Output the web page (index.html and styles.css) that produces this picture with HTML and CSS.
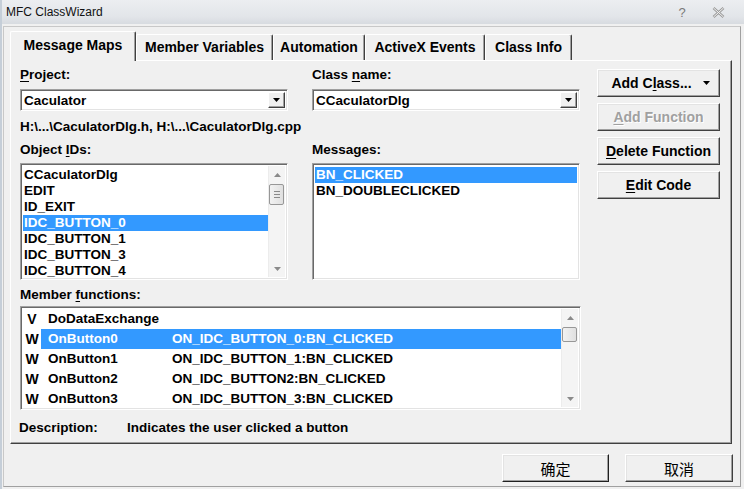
FILE: index.html
```html
<!DOCTYPE html>
<html>
<head>
<meta charset="utf-8">
<link rel="stylesheet" href="styles.css">
</head>
<body>
<div class="titlebar">
  <span class="title">MFC ClassWizard</span>
  <span class="tbtn help">?</span>
  <span class="tbtn close"><svg width="13" height="11" viewBox="0 0 13 11"><path d="M1.5 1 L11.5 10 M11.5 1 L1.5 10" stroke="#9a9a9a" stroke-width="2.6" fill="none"/><path d="M1.5 1 L11.5 10 M11.5 1 L1.5 10" stroke="#f4f4f4" stroke-width="1" fill="none"/></svg></span>
</div>
<div class="frame">
  <div class="tabs">
    <div class="tab active t1">Message Maps</div>
    <div class="tab t2">Member Variables</div>
    <div class="tab t3">Automation</div>
    <div class="tab t4">ActiveX Events</div>
    <div class="tab t5">Class Info</div>
  </div>
  <div class="pane">
    <div class="top">
      <div class="fields">
        <div class="label"><u>P</u>roject:</div>
        <div class="label">Class <u>n</u>ame:</div>
        <div class="combo"><span class="ctext">Caculator</span><span class="cbtn"><svg width="7" height="4" viewBox="0 0 7 4"><path d="M0 0H7L3.5 4Z" fill="#000"/></svg></span></div>
        <div class="combo"><span class="ctext">CCaculatorDlg</span><span class="cbtn"><svg width="7" height="4" viewBox="0 0 7 4"><path d="M0 0H7L3.5 4Z" fill="#000"/></svg></span></div>
        <div class="path">H:\...\CaculatorDlg.h, H:\...\CaculatorDlg.cpp</div>
        <div class="label lbl2">Object <u>I</u>Ds:</div>
        <div class="label lbl2">Messages:</div>
        <div class="listbox ids">
          <div class="items">
            <div class="item">CCaculatorDlg</div>
            <div class="item">EDIT</div>
            <div class="item">ID_EXIT</div>
            <div class="item sel">IDC_BUTTON_0</div>
            <div class="item">IDC_BUTTON_1</div>
            <div class="item">IDC_BUTTON_3</div>
            <div class="item">IDC_BUTTON_4</div>
          </div>
          <div class="sbar">
            <div class="sarrow"><svg width="7" height="4" viewBox="0 0 7 4"><path d="M3.5 0L7 4H0Z" fill="#8a8a8a"/></svg></div>
            <div class="track"><div class="thumb t-ids"><span class="grip"></span><span class="grip"></span><span class="grip"></span></div></div>
            <div class="sarrow"><svg width="7" height="4" viewBox="0 0 7 4"><path d="M0 0H7L3.5 4Z" fill="#8a8a8a"/></svg></div>
          </div>
        </div>
        <div class="listbox msgs">
          <div class="items">
            <div class="item sel">BN_CLICKED</div>
            <div class="item">BN_DOUBLECLICKED</div>
          </div>
        </div>
      </div>
      <div class="actions">
        <div class="btn addclass">Add C<u>l</u>ass...<svg class="drop" width="7" height="4" viewBox="0 0 7 4"><path d="M0 0H7L3.5 4Z" fill="#000"/></svg></div>
        <div class="btn disabled"><u>A</u>dd Function</div>
        <div class="btn"><u>D</u>elete Function</div>
        <div class="btn"><u>E</u>dit Code</div>
      </div>
    </div>
    <div class="label mlabel">Member <u>f</u>unctions:</div>
    <div class="listbox members">
      <div class="items">
        <div class="row"><span class="ico">V</span><span class="fname">DoDataExchange</span><span class="fmap"></span></div>
        <div class="row sel"><span class="ico">W</span><span class="fname">OnButton0</span><span class="fmap">ON_IDC_BUTTON_0:BN_CLICKED</span></div>
        <div class="row"><span class="ico">W</span><span class="fname">OnButton1</span><span class="fmap">ON_IDC_BUTTON_1:BN_CLICKED</span></div>
        <div class="row"><span class="ico">W</span><span class="fname">OnButton2</span><span class="fmap">ON_IDC_BUTTON2:BN_CLICKED</span></div>
        <div class="row"><span class="ico">W</span><span class="fname">OnButton3</span><span class="fmap">ON_IDC_BUTTON_3:BN_CLICKED</span></div>
      </div>
      <div class="sbar">
        <div class="sarrow"><svg width="7" height="4" viewBox="0 0 7 4"><path d="M3.5 0L7 4H0Z" fill="#8a8a8a"/></svg></div>
        <div class="track"><div class="thumb t-mem"></div></div>
        <div class="sarrow"><svg width="7" height="4" viewBox="0 0 7 4"><path d="M0 0H7L3.5 4Z" fill="#8a8a8a"/></svg></div>
      </div>
    </div>
    <div class="desc"><span class="dlabel">Description:</span><span class="dtext">Indicates the user clicked a button</span></div>
  </div>
  <div class="footer">
    <div class="btn fbtn default">确定</div>
    <div class="btn fbtn">取消</div>
  </div>
</div>
</body>
</html>
```

FILE: styles.css
```css
* { box-sizing: border-box; }
html, body { margin: 0; padding: 0; }
body {
  width: 744px;
  height: 489px;
  overflow: hidden;
  background: #f0f0f0;
  font-family: "Liberation Sans", Arial, sans-serif;
  font-size: 13.5px;
  font-weight: bold;
  color: #000;
  border-left: 2px solid #c5ced8;
}
u { text-decoration-thickness: 1px; text-underline-offset: 2px; }

.titlebar {
  height: 24px;
  display: flex;
  align-items: center;
  padding-left: 4px;
  padding-right: 8px;
  background: linear-gradient(#eceef1, #e2e5e9 70%, #d7dbe0);
}
.title { flex: 1; font-weight: normal; font-size: 12px; color: #111; }
.tbtn { width: 36px; display: flex; justify-content: center; align-items: center; }
.help { font-weight: normal; font-size: 13px; color: #7a7a7a; }

.frame {
  margin: 2px 0 0 1px;
  width: 738px;
  height: 461px;
  border: 1px solid;
  border-color: #c8c8c8 #a0a0a0 #a0a0a0 #c8c8c8;
  padding: 4px 7px 0 6px;
}

.tabs { display: flex; align-items: flex-end; height: 29px; padding-left: 2px; }
.tab {
  height: 26px;
  display: flex;
  align-items: center;
  justify-content: center;
  border-top: 1px solid #fff;
  border-left: 1px solid #fff;
  border-right: 1px solid #404040;
  box-shadow: inset -1px 0 #a0a0a0;
  border-radius: 2px 2px 0 0;
  font-size: 14px;
  padding-bottom: 1px;
}
.tab.active { height: 30px; margin-bottom: -1px; background: #f0f0f0; position: relative; z-index: 2; padding-bottom: 3px; margin-left: -2px; }
.t1 { width: 126px; }
.t2 { width: 137px; }
.t3 { width: 92px; }
.t4 { width: 120px; }
.t5 { width: 87px; }

.pane {
  width: 722px;
  height: 384px;
  border: 1px solid;
  border-color: #fff #404040 #404040 #fff;
  box-shadow: inset -1px -1px #a0a0a0;
  padding: 6px 11px 0 9px;
}

.top { display: flex; align-items: flex-start; }
.fields {
  display: grid;
  grid-template-columns: 268px 268px;
  column-gap: 24px;
  row-gap: 0;
  grid-template-rows: auto auto auto auto auto;
}
.label { line-height: 16px; white-space: nowrap; }
.fields .combo { grid-row: 2; margin-top: 6px; }
.path { grid-column: 1 / 3; grid-row: 3; margin-top: 8px; line-height: 16px; white-space: nowrap; }
.lbl2 { grid-row: 4; margin-top: 7px; }
.ids, .msgs { grid-row: 5; margin-top: 5px; }

.combo {
  height: 22px;
  background: #fff;
  border: 1px solid;
  border-color: #a0a0a0 #fff #fff #a0a0a0;
  box-shadow: inset 1px 1px #696969, inset -1px -1px #e3e3e3;
  display: flex;
  align-items: stretch;
  padding: 2px 2px 2px 3px;
}
.ctext { flex: 1; line-height: 18px; }
.cbtn {
  width: 17px;
  background: #f0f0f0;
  border: 1px solid;
  border-color: #fff #404040 #404040 #fff;
  box-shadow: inset -1px -1px #a0a0a0;
  display: flex;
  align-items: center;
  justify-content: center;
}

.listbox {
  background: #fff;
  border: 1px solid;
  border-color: #a0a0a0 #fff #fff #a0a0a0;
  box-shadow: inset 1px 1px #696969, inset -1px -1px #e3e3e3;
  padding: 2px;
  display: flex;
  height: 117px;
}
.items { flex: 1; padding-top: 1px; overflow: hidden; }
.item { line-height: 16px; height: 16px; padding-left: 1px; white-space: nowrap; }
.sel { background: #3399ff; color: #fff; }

.sbar { width: 17px; background: #f4f4f4; display: flex; flex-direction: column; border-left: 1px solid #ececec; }
.sarrow { height: 17px; display: flex; align-items: center; justify-content: center; }
.track { flex: 1; padding: 1px 1px 0 0; }
.thumb {
  width: 15px;
  border: 1px solid #979797;
  border-radius: 2px;
  background: linear-gradient(90deg, #f2f2f2, #e0e0e0);
  display: flex;
  flex-direction: column;
  align-items: center;
  justify-content: center;
  gap: 2px;
}
.t-ids { height: 21px; }
.t-mem { height: 15px; }
.grip { width: 6px; height: 1px; background: #8a8a8a; }

.actions {
  margin-left: 17px;
  width: 123px;
  padding-top: 2px;
  display: flex;
  flex-direction: column;
  gap: 6px;
}
.btn {
  height: 28px;
  display: flex;
  align-items: center;
  justify-content: center;
  background: #f0f0f0;
  border: 1px solid;
  border-color: #fff #404040 #404040 #fff;
  box-shadow: inset -1px -1px #a0a0a0, inset 1px 1px #e3e3e3;
  font-size: 14px;
  white-space: nowrap;
}
.addclass .drop { margin-left: 11px; }
.addclass { padding-left: 4px; }
.disabled { color: #a0a0a0; text-shadow: 1px 1px #fff; }

.mlabel { margin-top: 7px; }
.members { width: 561px; height: 104px; margin-top: 3px; }
.members .items { padding-top: 0; }
.row { display: flex; height: 20px; line-height: 20px; white-space: nowrap; }
.ico { width: 18px; text-align: center; background: #fff; color: #000; font-size: 14px; }
.fname { width: 131px; padding-left: 7px; }
.row .fmap { flex: 1; }

.desc { display: flex; margin-top: 10px; margin-left: -1px; line-height: 16px; }
.dlabel { width: 108px; }

.footer { display: flex; justify-content: flex-end; gap: 16px; padding-top: 10px; }
.fbtn {
  height: 28px;
  font-family: "Liberation Sans", "Noto Sans CJK SC", sans-serif;
  font-weight: normal;
  font-size: 15px;
}
.fbtn.default { width: 107px; border-color: #fff #202020 #202020 #fff; }
.fbtn:not(.default) { width: 108px; }
```
